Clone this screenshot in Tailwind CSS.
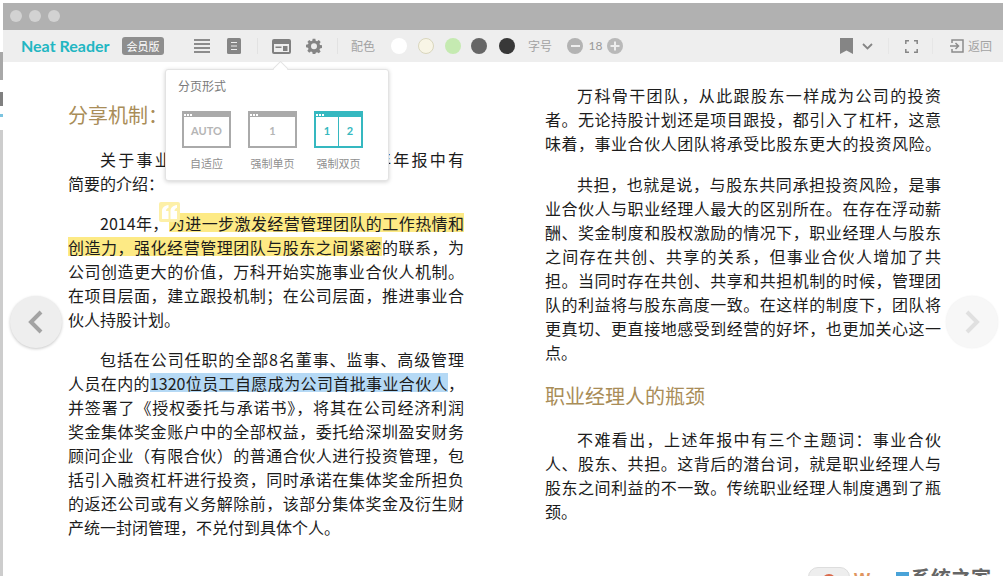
<!DOCTYPE html>
<html lang="zh"><head><meta charset="utf-8">
<script src="https://cdn.jsdelivr.net/npm/@tailwindcss/browser@4"></script>
</head>
<body class="m-0 bg-white">
<div class="relative w-[1003px] h-[576px] overflow-hidden bg-white font-['Noto_Sans_CJK_SC','Noto_Sans',sans-serif] text-[#1c1c1c]">
  <!-- sliver of the window behind -->
  <div class="absolute left-0 top-[52px] w-[3px] h-[524px] flex flex-col bg-[#cdcdcd]">
    <div class="h-[28px] bg-[#a8a8a8]"></div>
    <div class="h-[12px] bg-white"></div>
    <div class="h-[14px] bg-[#808080]"></div>
    <div class="h-[8px] bg-white"></div>
    <div class="h-[3px] bg-[#7cc4e0]"></div>
    <div class="h-[13px] bg-white"></div>
  </div>
  <div class="pl-[3px] pt-[3px] flex flex-col">
    <div class="h-[27px] bg-[#b1b1b1] flex items-center gap-[7px] pl-[7px] pb-[2px]">
      <span class="w-[12px] h-[12px] rounded-full bg-[#d2d2d2]"></span>
      <span class="w-[12px] h-[12px] rounded-full bg-[#d2d2d2]"></span>
      <span class="w-[12px] h-[12px] rounded-full bg-[#d2d2d2]"></span>
    </div>
    <div class="h-[32px] bg-[#eeeeee] flex items-center text-[#a3a3a3] text-[12px]">
      <span class="ml-[18px] w-[91px] font-['Lato',sans-serif] font-bold text-[16px] text-[#22b6c2] whitespace-nowrap">Neat Reader</span>
      <span class="ml-[10px] w-[42px] h-[18px] rounded-[3px] bg-[#8e8e8e] text-white text-[11px] flex items-center justify-center">会员版</span>
      <svg class="ml-[30px]" width="16" height="14" viewBox="0 0 16 14" fill="#8c8c8c"><rect width="16" height="2" y="0"/><rect width="16" height="2" y="4"/><rect width="16" height="2" y="8"/><rect width="16" height="2" y="12"/></svg>
      <svg class="ml-[17px]" width="14" height="16" viewBox="0 0 14 16"><rect width="14" height="16" rx="1.5" fill="#858585"/><path d="M4 4.500h6M4 8h6M4 11.500h6" stroke="#eee" stroke-width="1.200"/></svg>
      <span class="ml-[16px] w-px h-[16px] bg-[#e2e2e2]"></span>
      <svg class="ml-[14px]" width="19" height="15" viewBox="0 0 19 15"><rect x="1" y="1" width="17" height="13" rx="1" fill="none" stroke="#808080" stroke-width="2"/><rect x="1" y="1" width="17" height="4" fill="#808080"/><rect x="3.500" y="7.500" width="6" height="1.500" fill="#808080"/><rect x="11" y="7" width="4.500" height="5" fill="#808080"/></svg>
      <svg class="ml-[15px]" width="16" height="16" viewBox="0 0 24 24" fill="#858585"><path fill-rule="evenodd" d="M10 1h4l.6 3.100 2 .8 2.600-1.800 2.800 2.800-1.800 2.600.8 2 3 .5v4l-3 .6-.8 2 1.800 2.600-2.800 2.800-2.600-1.800-2 .8L14 24h-4l-.6-3-2-.8-2.600 1.800L2 19.200l1.800-2.600-.8-2-3-.6v-4l3-.5.8-2L2 5.900l2.800-2.800 2.600 1.800 2-.8zM12 8a4.500 4.500 0 1 0 0 9 4.500 4.500 0 0 0 0-9z"/></svg>
      <span class="ml-[15px] w-px h-[16px] bg-[#e2e2e2]"></span>
      <span class="ml-[13px] w-[26px] whitespace-nowrap">配色</span>
      <span class="ml-[14px] w-[16px] h-[16px] rounded-full bg-white"></span>
      <span class="ml-[11px] w-[16px] h-[16px] rounded-full bg-[#f8f5e6] border border-[#d9d6bd]"></span>
      <span class="ml-[11px] w-[16px] h-[16px] rounded-full bg-[#c5eab1]"></span>
      <span class="ml-[10px] w-[16px] h-[16px] rounded-full bg-[#666666]"></span>
      <span class="ml-[12px] w-[16px] h-[16px] rounded-full bg-[#383838]"></span>
      <span class="ml-[13px] w-[26px] whitespace-nowrap">字号</span>
      <span class="ml-[13px] w-[16px] h-[16px] rounded-full bg-[#b3b3b3] flex items-center justify-center"><span class="w-[9px] h-[2px] bg-[#eee]"></span></span>
      <span class="ml-[5px] w-[15px] text-center font-['Lato',sans-serif] text-[12px] text-[#999]">18</span>
      <svg class="ml-[4px]" width="16" height="16" viewBox="0 0 16 16"><circle cx="8" cy="8" r="8" fill="#b9b9b9"/><path d="M3.500 8h9M8 3.500v9" stroke="#eee" stroke-width="2"/></svg>
      <svg class="ml-[217px]" width="13" height="16" viewBox="0 0 13 16"><path d="M0 0h13v16l-6.500-3.500L0 16z" fill="#858585"/></svg>
      <svg class="ml-[9px]" width="11" height="7" viewBox="0 0 11 7"><path d="M1 1l4.500 4.500L10 1" fill="none" stroke="#858585" stroke-width="1.800"/></svg>
      <span class="ml-[15px] w-px h-[16px] bg-[#e6e6e6]"></span>
      <svg class="ml-[16px]" width="13" height="13" viewBox="0 0 13 13"><path d="M.8 4V.8H4M9 .8h3.200V4M12.200 9v3.200H9M4 12.200H.8V9" fill="none" stroke="#858585" stroke-width="1.500"/></svg>
      <span class="ml-[14px] w-px h-[16px] bg-[#e6e6e6]"></span>
      <svg class="ml-[17px]" width="14" height="14" viewBox="0 0 14 14"><path d="M2 4V1h11v12H2v-3" fill="none" stroke="#8c8c8c" stroke-width="1.500"/><path d="M0 7h8M5.500 4l3 3-3 3" fill="none" stroke="#8c8c8c" stroke-width="1.500"/></svg>
      <span class="ml-[4px] whitespace-nowrap text-[12px]">返回</span>
    </div>
  </div>

  <div class="flex text-[16px] leading-[24px]">
    <div class="ml-[68px] w-[396px] pt-[37px]">
      <h2 class="text-[20px] leading-[32px] text-[#a98d58] mb-[16px] font-normal">分享机制：</h2>
      <p class="mb-[16px]">
        <span class="block indent-[32px] [text-align-last:justify]">关于事业合伙人制度，万科在2014年年报中有</span>
        <span class="block">简要的介绍：</span>
      </p>
      <p class="mb-[16px]">
        <span class="block indent-[32px] [text-align-last:justify]">2014年，<span class="bg-[linear-gradient(transparent_2px,#fdea85_2px,#fdea85_21px,transparent_21px)]">为进一步激发经营管理团队的工作热情和</span></span>
        <span class="block [text-align-last:justify]"><span class="bg-[linear-gradient(transparent_2px,#fdea85_2px,#fdea85_21px,transparent_21px)]">创造力，强化经营管理团队与股东之间紧密</span>的联系，为</span>
        <span class="block [text-align-last:justify]">公司创造更大的价值，万科开始实施事业合伙人机制。</span>
        <span class="block [text-align-last:justify]">在项目层面，建立跟投机制；在公司层面，推进事业合</span>
        <span class="block">伙人持股计划。</span>
      </p>
      <p>
        <span class="block indent-[32px] [text-align-last:justify]">包括在公司任职的全部8名董事、监事、高级管理</span>
        <span class="block [text-align-last:justify]">人员在内的<span class="bg-[linear-gradient(transparent_2px,#b5d9f5_2px,#b5d9f5_21px,transparent_21px)]">1320位员工自愿成为公司首批事业合伙人</span>，</span>
        <span class="block [text-align-last:justify]">并签署了《授权委托与承诺书》，将其在公司经济利润</span>
        <span class="block [text-align-last:justify]">奖金集体奖金账户中的全部权益，委托给深圳盈安财务</span>
        <span class="block [text-align-last:justify]">顾问企业（有限合伙）的普通合伙人进行投资管理，包</span>
        <span class="block [text-align-last:justify]">括引入融资杠杆进行投资，同时承诺在集体奖金所担负</span>
        <span class="block [text-align-last:justify]">的返还公司或有义务解除前，该部分集体奖金及衍生财</span>
        <span class="block">产统一封闭管理，不兑付到具体个人。</span>
      </p>
    </div>
    <div class="ml-[81px] w-[396px] pt-[21px]">
      <p class="mb-[17px]">
        <span class="block indent-[32px] [text-align-last:justify]">万科骨干团队，从此跟股东一样成为公司的投资</span>
        <span class="block [text-align-last:justify]">者。无论持股计划还是项目跟投，都引入了杠杆，这意</span>
        <span class="block [text-align-last:justify]">味着，事业合伙人团队将承受比股东更大的投资风险。</span>
      </p>
      <p class="mb-[16px]">
        <span class="block indent-[32px] [text-align-last:justify]">共担，也就是说，与股东共同承担投资风险，是事</span>
        <span class="block [text-align-last:justify]">业合伙人与职业经理人最大的区别所在。在存在浮动薪</span>
        <span class="block [text-align-last:justify]">酬、奖金制度和股权激励的情况下，职业经理人与股东</span>
        <span class="block [text-align-last:justify]">之间存在共创、共享的关系，但事业合伙人增加了共</span>
        <span class="block [text-align-last:justify]">担。当同时存在共创、共享和共担机制的时候，管理团</span>
        <span class="block [text-align-last:justify]">队的利益将与股东高度一致。在这样的制度下，团队将</span>
        <span class="block [text-align-last:justify]">更真切、更直接地感受到经营的好坏，也更加关心这一</span>
        <span class="block">点。</span>
      </p>
      <h2 class="text-[20px] leading-[32px] text-[#a98d58] mb-[15px] font-normal">职业经理人的瓶颈</h2>
      <p>
        <span class="block indent-[32px] [text-align-last:justify]">不难看出，上述年报中有三个主题词：事业合伙</span>
        <span class="block [text-align-last:justify]">人、股东、共担。这背后的潜台词，就是职业经理人与</span>
        <span class="block [text-align-last:justify]">股东之间利益的不一致。传统职业经理人制度遇到了瓶</span>
        <span class="block">颈。</span>
      </p>
    </div>
  </div>

  <div class="absolute left-[159px] top-[202px] w-[21px] h-[20px] rounded-[2px] bg-[#fdf0a8] flex items-center justify-center">
    <svg width="15" height="14" viewBox="0 0 15 13" fill="#fff" preserveAspectRatio="none"><path d="M6.500 0v2.500C5 3 4 4 4 5.500h2.500V13H0V5.500C0 2.500 2.500.5 6.500 0zM15 0v2.500c-1.500.5-2.500 1.500-2.500 3H15V13H8.500V5.500C8.500 2.500 11 .5 15 0z"/></svg>
  </div>

  <div class="absolute left-[165px] top-[69px] w-[224px] h-[112px] bg-white border border-[#e3e3e3] rounded-[3px] shadow-[0_1px_4px_rgba(0,0,0,0.18)] px-[12px] pt-[7px]">
    <div class="text-[12px] leading-[18px] text-[#7a7a7a]">分页形式</div>
    <div class="mt-[16px] flex pl-[4px] gap-[17px] text-[#8f8f8f] text-[11px]">
      <div class="w-[49px] flex flex-col items-center">
        <div class="w-[49px] h-[37px] border-2 border-[#aaaaaa] flex flex-col">
          <div class="h-[4px] bg-[#aaaaaa] flex items-center gap-px"><i class="w-[2px] h-[2px] bg-white"></i><i class="w-[2px] h-[2px] bg-white"></i><i class="w-[2px] h-[2px] bg-white"></i></div>
          <div class="flex-1 flex items-center justify-center font-['Lato',sans-serif] font-bold text-[11px] text-[#b5b5b5]">AUTO</div>
        </div>
        <span class="mt-[7px] leading-[16px] whitespace-nowrap">自适应</span>
      </div>
      <div class="w-[49px] flex flex-col items-center">
        <div class="w-[49px] h-[37px] border-2 border-[#aaaaaa] flex flex-col">
          <div class="h-[4px] bg-[#aaaaaa] flex items-center gap-px"><i class="w-[2px] h-[2px] bg-white"></i><i class="w-[2px] h-[2px] bg-white"></i><i class="w-[2px] h-[2px] bg-white"></i></div>
          <div class="flex-1 flex items-center justify-center font-['Lato',sans-serif] font-bold text-[11px] text-[#b5b5b5]">1</div>
        </div>
        <span class="mt-[7px] leading-[16px] whitespace-nowrap">强制单页</span>
      </div>
      <div class="w-[49px] flex flex-col items-center">
        <div class="w-[49px] h-[37px] border-2 border-[#35b8c0] flex flex-col">
          <div class="h-[4px] bg-[#35b8c0] flex items-center gap-px"><i class="w-[2px] h-[2px] bg-white"></i><i class="w-[2px] h-[2px] bg-white"></i><i class="w-[2px] h-[2px] bg-white"></i></div>
          <div class="flex-1 flex font-['Lato',sans-serif] font-bold text-[11px] text-[#35b8c0]">
            <span class="flex-1 flex items-center justify-center border-r border-[#35b8c0]">1</span>
            <span class="flex-1 flex items-center justify-center">2</span>
          </div>
        </div>
        <span class="mt-[7px] leading-[16px] whitespace-nowrap">强制双页</span>
      </div>
    </div>
  </div>
  <div class="absolute left-[275px] top-[63px] w-[11px] h-[11px] rotate-45 bg-white border-l border-t border-[#e3e3e3]"></div>

  <div class="absolute left-[10px] top-[296px] w-[52px] h-[52px] rounded-full bg-[#eeeeee] shadow-[0_1px_3px_rgba(0,0,0,0.22)] flex items-center justify-center">
    <svg width="16" height="24" viewBox="0 0 16 24"><path d="M13 2L3 12l10 10" fill="none" stroke="#a3a3a3" stroke-width="4"/></svg>
  </div>
  <div class="absolute left-[946px] top-[296px] w-[52px] h-[52px] rounded-full bg-[#f7f7f7] shadow-[0_0_2px_rgba(0,0,0,0.08)] flex items-center justify-center">
    <svg width="16" height="24" viewBox="0 0 16 24"><path d="M3 2l10 10L3 22" fill="none" stroke="#e0e0e0" stroke-width="4"/></svg>
  </div>

  <div class="absolute left-[808px] top-[567px] flex items-start h-[20px]">
    <span class="w-[42px] h-[20px] rounded-full bg-[#eeeeee] border border-[#dddddd] flex justify-center pt-[6px]"><span class="w-[14px] h-[14px] rounded-full bg-[#d9694a]"></span></span>
    <span class="ml-[4px] mt-[3px] w-[26px] font-bold text-[17px] leading-[20px] text-[#e0955f] font-['Liberation_Sans',sans-serif]">W</span>
    <span class="ml-[16px] mt-[5px] w-[13px] h-[20px] bg-[#4aa3d8]"></span>
    <span class="ml-[2px] mt-[1px] text-[20px] leading-[20px] font-bold text-[#666] whitespace-nowrap">系统之家</span>
  </div>
</div>
</body></html>
